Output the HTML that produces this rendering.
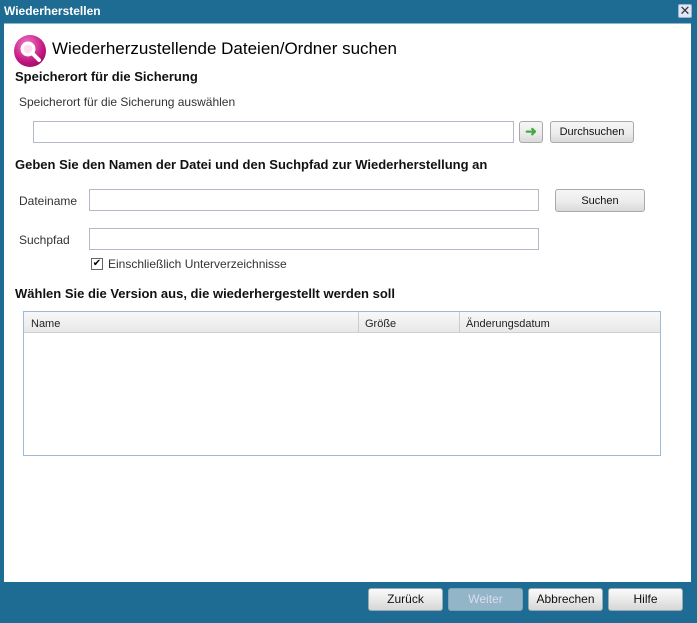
<!DOCTYPE html>
<html><head><meta charset="utf-8"><style>
*{margin:0;padding:0;box-sizing:border-box}
body{width:697px;height:623px;background:#1e6b93;position:relative;overflow:hidden;font-family:"Liberation Sans",sans-serif;font-size:12px;color:#222}
.a{position:absolute}
.h{font-family:"Liberation Sans",sans-serif;font-weight:bold;font-size:13px;color:#111}
.inp{position:absolute;border:1px solid #b4b9c8;background:#fff}
.btn{position:absolute;border:1px solid #a9a9a9;border-radius:3px;background:linear-gradient(#f6f6f6 0%,#ececec 55%,#d9d9d9 100%);font-size:11px;text-align:center;color:#111}
.bb{position:absolute;top:588px;width:75px;height:23px;border:1px solid #9aa8b0;border-radius:3px;background:linear-gradient(#fafafa,#e8e8e8 55%,#d6d6d6);font-size:12px;text-align:center;line-height:21px;color:#111}
</style></head><body>
<div class="a" style="left:4px;top:4px;font-weight:bold;font-size:12px;color:#fff">Wiederherstellen</div>
<div class="a" style="left:678px;top:4px;width:14px;height:14px;background:#dfe9f5;border:1px solid #9fb3cc;border-radius:2px;color:#334;font-size:13px;line-height:11px;text-align:center">✕</div>
<div class="a" style="left:4px;top:23px;width:687px;height:559px;background:#fff;border-top:1px solid #8fb4d0"></div>
<div class="a" style="left:14px;top:35px;width:32px;height:32px;border-radius:50%;background:radial-gradient(circle at 40% 30%,#f27ac6,#c0127e 60%,#7a0a4f)"></div>
<svg class="a" style="left:14px;top:35px" width="32" height="32"><circle cx="14" cy="14" r="6" fill="#fde" stroke="#fff" stroke-width="3"/><path d="M18 18 L25 25" stroke="#fff" stroke-width="4" stroke-linecap="round"/></svg>
<div class="a" style="left:52px;top:39px;font-size:17px;color:#000">Wiederherzustellende Dateien/Ordner suchen</div>
<div class="a h" style="left:15px;top:69px">Speicherort für die Sicherung</div>
<div class="a" style="left:19px;top:95px;color:#333">Speicherort für die Sicherung auswählen</div>
<div class="inp" style="left:33px;top:121px;width:481px;height:22px"></div>
<div class="btn" style="left:519px;top:121px;width:24px;height:22px;color:#4a4;font-size:14px;line-height:19px;font-weight:bold">➜</div>
<div class="btn" style="left:550px;top:121px;width:84px;height:22px;line-height:21px">Durchsuchen</div>
<div class="a h" style="left:15px;top:157px">Geben Sie den Namen der Datei und den Suchpfad zur Wiederherstellung an</div>
<div class="a" style="left:19px;top:194px;color:#333">Dateiname</div>
<div class="inp" style="left:89px;top:189px;width:450px;height:22px"></div>
<div class="btn" style="left:555px;top:189px;width:90px;height:23px;line-height:22px">Suchen</div>
<div class="a" style="left:19px;top:233px;color:#333">Suchpfad</div>
<div class="inp" style="left:89px;top:228px;width:450px;height:22px"></div>
<div class="a" style="left:91px;top:258px;width:12px;height:12px;border:1px solid #666;background:#fff;font-size:10px;line-height:10px;text-align:center;color:#000">✔</div>
<div class="a" style="left:108px;top:257px;color:#333">Einschließlich Unterverzeichnisse</div>
<div class="a h" style="left:15px;top:286px">Wählen Sie die Version aus, die wiederhergestellt werden soll</div>
<div class="a" style="left:23px;top:311px;width:638px;height:145px;border:1px solid #9dbbd8;background:#fff"></div>
<div class="a" style="left:24px;top:312px;width:636px;height:21px;background:linear-gradient(#f8f8f8,#e8e8e8);border-bottom:1px solid #d0d0d0"></div>
<div class="a" style="left:358px;top:312px;width:1px;height:21px;background:#ccc"></div>
<div class="a" style="left:459px;top:312px;width:1px;height:21px;background:#ccc"></div>
<div class="a" style="left:31px;top:318px;font-size:11px">Name</div>
<div class="a" style="left:365px;top:318px;font-size:11px">Größe</div>
<div class="a" style="left:466px;top:318px;font-size:11px">Änderungsdatum</div>
<div class="bb" style="left:368px">Zurück</div>
<div class="bb" style="left:448px;background:#92b6c8;color:#dde;border-color:#7fa3b6">Weiter</div>
<div class="bb" style="left:528px">Abbrechen</div>
<div class="bb" style="left:608px">Hilfe</div>
</body></html>
